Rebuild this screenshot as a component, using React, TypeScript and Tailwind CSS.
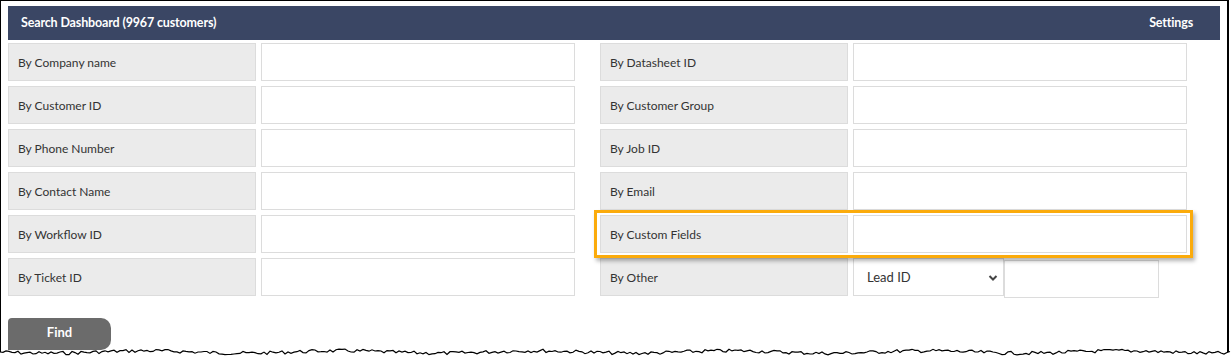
import React from "react";

function TornEdge() {
  const pts: string[] = [];
  let seed = 7;
  const rnd = () => {
    seed = (seed * 9301 + 49297) % 233280;
    return seed / 233280;
  };
  for (let x = 0; x <= 1231; x += 3) {
    const y = 352 + Math.sin(x / 31) * 1.2 + (rnd() - 0.5) * 3.5;
    pts.push(`${x},${y.toFixed(1)}`);
  }
  const line = "M" + pts.join(" L");
  const fill = line + " L1231,360 L0,360 Z";
  return (
    <svg className="absolute left-0 top-0" width="1231" height="360" viewBox="0 0 1231 360">
      <path d={fill} fill="#ffffff" />
      <path d={line} fill="none" stroke="#000" strokeWidth="1.2" />
    </svg>
  );
}

function Label({ text }: { text: string }) {
  return (
    <div className="flex h-[38px] w-[248px] shrink-0 items-center border border-[#dcdcdc] bg-[#ebebeb] pl-[9px] pt-[2px] text-[12px] text-[#333]">
      {text}
    </div>
  );
}

function Input({ w }: { w: string }) {
  return <div className={`h-[38px] shrink-0 border border-[#dcdcdc] bg-white ${w}`} />;
}

const left = [
  "By Company name",
  "By Customer ID",
  "By Phone Number",
  "By Contact Name",
  "By Workflow ID",
  "By Ticket ID",
];
const right = ["By Datasheet ID", "By Customer Group", "By Job ID", "By Email"];

export default function App() {
  return (
    <div
      className="relative h-[360px] w-[1231px] overflow-hidden bg-white"
      style={{ fontFamily: "Lato, 'Open Sans', sans-serif" }}
    >
      <div className="h-[360px] w-[1229px] border-l border-r-2 border-t border-black px-[7px] pt-[5px]">
        <div className="flex h-[34px] items-center justify-between bg-[#3a4664] pl-[13px] pr-[27px] text-[12.5px] font-bold tracking-[-0.15px] text-white">
          <span>Search Dashboard (9967 customers)</span>
          <span>Settings</span>
        </div>
        <div className="mt-[3px] flex gap-[25px]">
          <div className="flex flex-col gap-[5px]">
            {left.map((t) => (
              <div key={t} className="flex gap-[5px]">
                <Label text={t} />
                <Input w="w-[314px]" />
              </div>
            ))}
          </div>
          <div className="flex flex-col gap-[5px]">
            {right.map((t) => (
              <div key={t} className="flex gap-[5px]">
                <Label text={t} />
                <Input w="w-[334px]" />
              </div>
            ))}
            <div className="relative flex gap-[5px]">
              <Label text="By Custom Fields" />
              <Input w="w-[334px]" />
              <div className="absolute -bottom-[5px] -left-[6px] -right-[6px] -top-[5px] border-[3px] border-[#fbab0b] shadow-[2px_3px_4px_rgba(0,0,0,0.3)]" />
            </div>
            <div className="flex">
              <Label text="By Other" />
              <div className="ml-[5px] flex h-[38px] w-[151px] shrink-0 items-center justify-between border border-[#dcdcdc] bg-white pl-[13px] pr-[5px] pt-[1px] text-[13px] text-[#333]">
                <span>Lead ID</span>
                <svg width="10" height="8" viewBox="0 0 10 8">
                  <path d="M1.5 2 L5 5.5 L8.5 2" fill="none" stroke="#444" strokeWidth="2" />
                </svg>
              </div>
              <div className="mt-[2px] h-[38px] w-[155px] shrink-0 border border-[#dcdcdc] bg-white" />
            </div>
          </div>
        </div>
        <div className="mt-[20px] flex h-[32px] w-[103px] items-center justify-center rounded-tl-[4px] rounded-r-[10px] bg-[#6b6b6b] pb-[3px] text-[13px] font-bold text-white">
          Find
        </div>
      </div>
      <TornEdge />
    </div>
  );
}
